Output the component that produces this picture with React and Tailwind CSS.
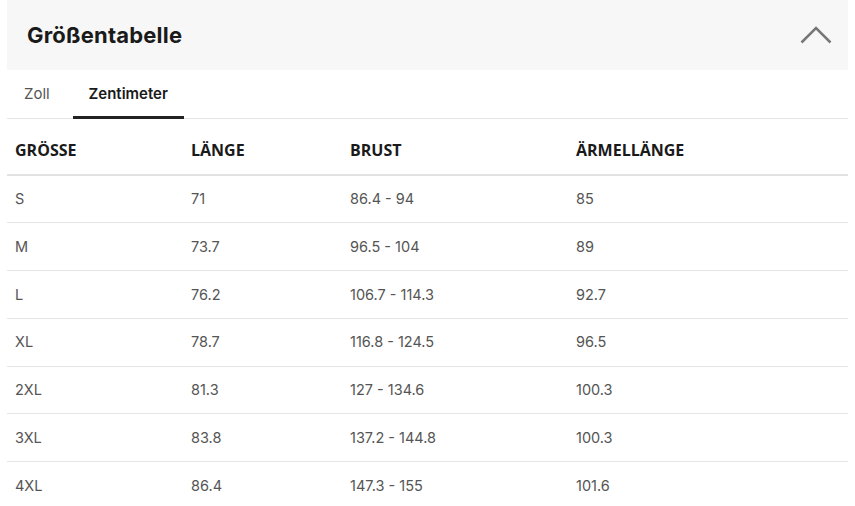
const rows = [
  ['S', '71', '86.4 - 94', '85'],
  ['M', '73.7', '96.5 - 104', '89'],
  ['L', '76.2', '106.7 - 114.3', '92.7'],
  ['XL', '78.7', '116.8 - 124.5', '96.5'],
  ['2XL', '81.3', '127 - 134.6', '100.3'],
  ['3XL', '83.8', '137.2 - 144.8', '100.3'],
  ['4XL', '86.4', '147.3 - 155', '101.6'],
];

const cols = ['w-[176px]', 'w-[159px]', 'w-[226px]', ''];

export default function App() {
  return (
    <div className="w-[855px] h-[506px] bg-white px-[7px] overflow-hidden font-['Inter',sans-serif]">
      <div className="h-[70px] bg-[#f7f7f7] flex items-center justify-between pl-[20px] pr-[16px]">
        <h2 className="text-[22px] font-bold text-[#1a1a1a] tracking-[0.2px]">Größentabelle</h2>
        <svg width="32" height="20" viewBox="0 0 32 20" fill="none">
          <path d="M1.5 17.5 L16 3 L30.5 17.5" stroke="#777" strokeWidth="2.5" />
        </svg>
      </div>
      <div className="flex h-[49px] border-b border-[#e5e5e5] text-[15px]">
        <div className="pl-[17px] pr-[22px] flex items-center text-[#555]">Zoll</div>
        <div className="w-[111px] ml-[1px] flex items-center justify-center font-semibold text-[#1a1a1a] border-b-[3px] border-[#222] pt-[3px] -mb-[1px]">
          Zentimeter
        </div>
      </div>
      <table className="w-full border-collapse">
        <thead>
          <tr className="h-[56px] border-b-2 border-[#e2e2e2]">
            {['GRÖSSE', 'LÄNGE', 'BRUST', 'ÄRMELLÄNGE'].map((h, i) => (
              <th key={h} className={`${cols[i]} px-[8px] text-left font-['Open_Sans',sans-serif] font-bold text-[16px] text-[#1a1a1a] pt-[6px]`}>
                {h}
              </th>
            ))}
          </tr>
        </thead>
        <tbody>
          {rows.map((r, ri) => (
            <tr key={ri} className={`h-[47.8px] ${ri < rows.length - 1 ? 'border-b border-[#e5e5e5]' : ''}`}>
              {r.map((c, ci) => (
                <td key={ci} className="px-[8px] text-[14.5px] text-[#555]">
                  {c}
                </td>
              ))}
            </tr>
          ))}
        </tbody>
      </table>
    </div>
  );
}
